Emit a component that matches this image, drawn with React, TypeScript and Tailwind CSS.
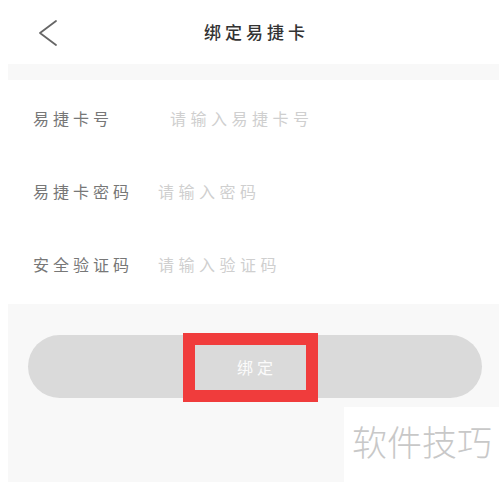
import React from "react";

const font = { fontFamily: '"Noto Sans CJK SC", "Noto Sans", sans-serif' };

function Field({ label, placeholder, labelW }: { label: string; placeholder: string; labelW: string }) {
  return (
    <div className="flex h-[73px] items-center pl-[33px]">
      <span className={`${labelW} shrink-0 text-[16px] tracking-[4px] text-[#777]`}>{label}</span>
      <input
        className="min-w-0 flex-1 bg-transparent text-[16px] tracking-[4.5px] text-[#333] outline-none placeholder:text-[#cfcfcf]"
        placeholder={placeholder}
        style={font}
      />
    </div>
  );
}

export default function App() {
  return (
    <div className="relative h-[482px] w-[499px] overflow-hidden bg-white" style={font}>
      {/* header */}
      <div className="relative flex h-16 items-center justify-center">
        <button className="absolute left-[33px] top-[14px] p-1" aria-label="返回">
          <svg width="22" height="30" viewBox="0 0 22 30" fill="none">
            <polyline points="19,3 3,15 19,27" stroke="#666" strokeWidth="1.8" strokeLinecap="round" strokeLinejoin="round" />
          </svg>
        </button>
        <h1 className="pl-[14px] text-[17px] font-medium tracking-[4px] text-[#333]">绑定易捷卡</h1>
      </div>

      <div className="ml-2 h-4 bg-[#f8f8f8]" />

      {/* form */}
      <div className="h-[224px] pt-px">
        <Field label="易捷卡号" placeholder="请输入易捷卡号" labelW="w-[137px]" />
        <Field label="易捷卡密码" placeholder="请输入密码" labelW="w-[125px]" />
        <Field label="安全验证码" placeholder="请输入验证码" labelW="w-[125px]" />
      </div>

      {/* action area */}
      <div className="ml-2 h-[178px] bg-[#f8f8f8] pl-5 pr-[17px] pt-[31px]">
        <div className="relative">
          <button className="flex h-[63px] w-full items-center justify-center rounded-full bg-[#dadada] text-[16px] tracking-[4px] text-white/90">
            <span className="pl-[4px]">绑定</span>
          </button>
          <div className="pointer-events-none absolute left-[155px] top-[-2px] h-[69px] w-[135px] border-[12px] border-[#f03c3c]" />
        </div>
      </div>

      {/* watermark */}
      <div className="absolute bottom-0 right-0 flex h-[75px] w-[155px] items-start bg-white pl-[8px] pt-[16px]">
        <span className="text-[35px] font-light leading-none text-[#c8c8c8]">软件技巧</span>
      </div>
    </div>
  );
}
